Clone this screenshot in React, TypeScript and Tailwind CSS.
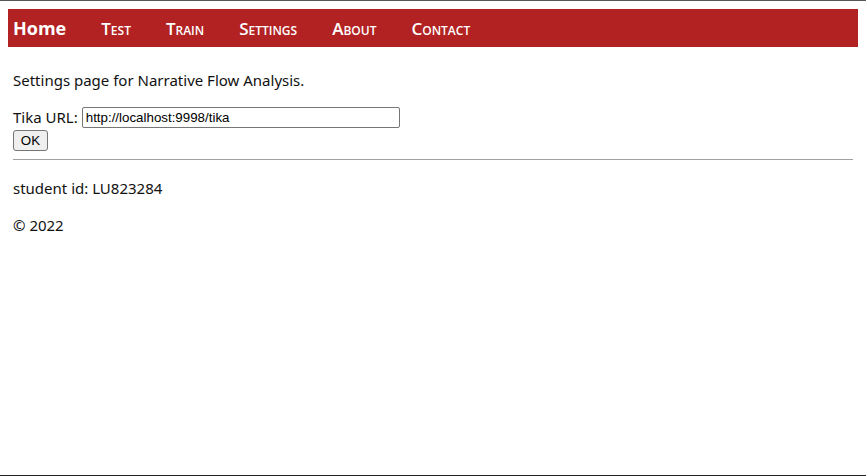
const navItems = ["Test", "Train", "Settings", "About", "Contact"];

function NavBar() {
    return (
        <nav className="mx-2 mt-2 h-[38px] bg-[#b22222] flex items-center pl-[5px] gap-[35px] text-white">
            <a className="text-[18px] font-bold leading-none" style={{ fontFamily: '"Open Sans", sans-serif' }}>Home</a>
            {navItems.map((item) => (
                <a
                    key={item}
                    className="text-[17px] font-semibold leading-none [font-variant:small-caps]"
                    style={{ fontFamily: '"Open Sans", sans-serif' }}
                >
                    {item}
                </a>
            ))}
        </nav>
    );
}

export default function App() {
    return (
        <div className="h-[476px] w-[866px] border-t border-t-[#555] border-b border-b-[#222] bg-white text-[#111] font-['Noto_Sans',sans-serif]">
            <NavBar />
            <div className="px-[13px] text-[15px] leading-[21px]">
                <p className="mt-[23px]">Settings page for Narrative Flow Analysis.</p>
                <div className="mt-4 flex items-center h-[21px]">
                    <span>Tika URL:</span>
                    <input
                        defaultValue="http://localhost:9998/tika"
                        className="ml-[4px] w-[318px] h-[21px] border border-[#767676] rounded-[2px] px-[3px] text-[13.33px] font-['Liberation_Sans',Arial,sans-serif] text-black outline-none"
                    />
                </div>
                <button className="mt-[2px] h-[21px] w-[35px] bg-[#efefef] border border-[#767676] rounded-[3px] text-[13.33px] font-['Liberation_Sans',Arial,sans-serif] text-black flex items-center justify-center">
                    OK
                </button>
                <hr className="mt-[8px] border-0 border-t border-[#a0a0a0]" />
                <p className="mt-[18px]">student id: LU823284</p>
                <p className="mt-4">© 2022</p>
            </div>
        </div>
    );
}
